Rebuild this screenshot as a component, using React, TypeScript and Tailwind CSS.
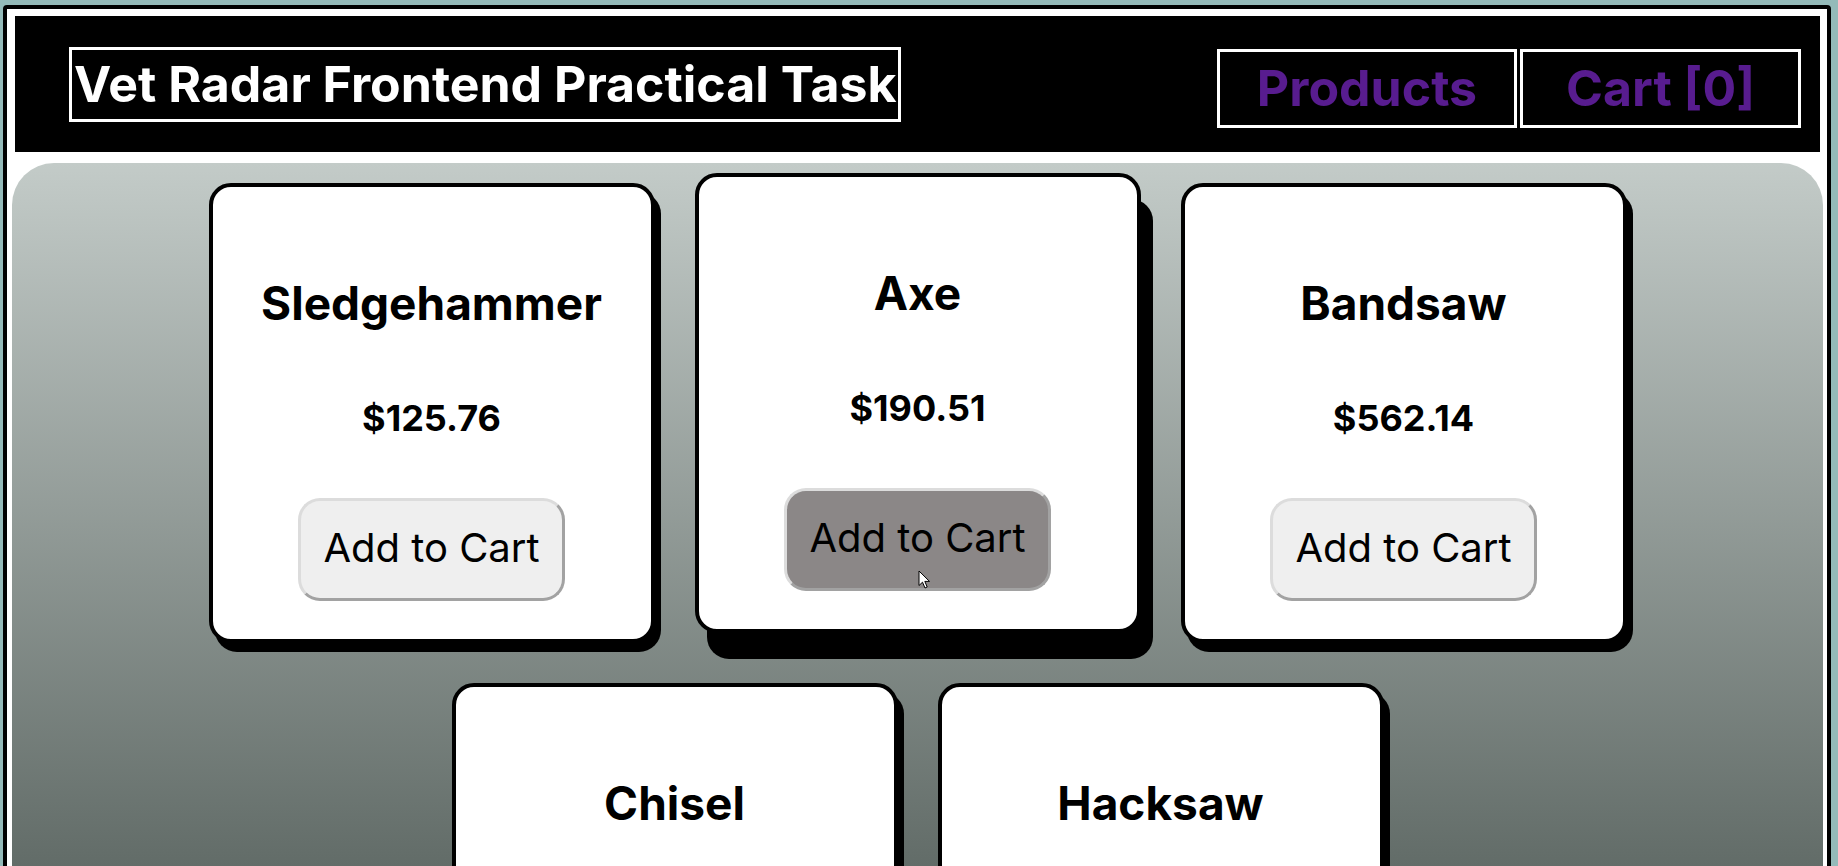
import React from 'react';

type Product = { id: number; name: string; price: number };

const products: Product[] = [
  { id: 1, name: 'Sledgehammer', price: 125.76 },
  { id: 2, name: 'Axe', price: 190.51 },
  { id: 3, name: 'Bandsaw', price: 562.14 },
  { id: 4, name: 'Chisel', price: 13.9 },
  { id: 5, name: 'Hacksaw', price: 18.45 },
];

const Cursor = () => (
  <svg
    width="13"
    height="20"
    viewBox="0 0 13 20"
    className="absolute left-[131px] top-[79px] pointer-events-none"
  >
    <path
      d="M1 1 L1 15.5 L4.5 12.2 L7 18 L9.2 17 L6.8 11.4 L11.5 11.4 Z"
      fill="#fff"
      stroke="#000"
      strokeWidth="1"
      strokeLinejoin="round"
    />
  </svg>
);

const ProductCard: React.FC<{ product: Product; hovered?: boolean }> = ({ product, hovered }) => (
  <div
    className={
      hovered
        ? 'w-[446px] h-[460px] bg-white border-4 border-black rounded-[22px] flex flex-col items-center pt-[88px] pb-[35px] -translate-y-[10px] shadow-[12px_26px_0_0_#000]'
        : 'w-[446px] h-[460px] bg-white border-4 border-black rounded-[22px] flex flex-col items-center pt-[88px] pb-[35px] shadow-[6px_9px_0_0_#000]'
    }
  >
    <h2 className="text-[46px] leading-[56px] font-bold text-black">{product.name}</h2>
    <h3 className="mt-[65px] text-[36px] leading-[44px] font-bold text-black">
      ${product.price.toFixed(2)}
    </h3>
    <button
      className={
        hovered
          ? 'relative mt-[58px] h-[103px] px-[22px] pt-[22px] pb-[25px] text-[40px] leading-[48px] font-normal text-black rounded-[22px] border-[3px] border-t-[#dcdcdc] border-l-[#dcdcdc] border-b-[#a2a2a2] border-r-[#a2a2a2] bg-[#8b8787]'
          : 'relative mt-[58px] h-[103px] px-[22px] pt-[22px] pb-[25px] text-[40px] leading-[48px] font-normal text-black rounded-[22px] border-[3px] border-t-[#dcdcdc] border-l-[#dcdcdc] border-b-[#a2a2a2] border-r-[#a2a2a2] bg-[#efefef]'
      }
    >
      Add to Cart
      {hovered && <Cursor />}
    </button>
  </div>
);

export default function App() {
  return (
    <div className="h-screen overflow-hidden bg-[#94bab9] pt-[5px] pl-[3px] pr-[7px] font-['Inter',sans-serif]">
      <div className="h-[900px] border-4 border-black rounded-[4px] bg-white pl-[5px] pr-[4px] pt-[7px]">
        {/* header */}
        <header className="mx-[3px] h-[136px] bg-black flex items-center justify-between pl-[54px] pr-[19px]">
          <div className="border-[3px] border-white px-[2px] mt-[1px]">
            <h1 className="text-[50px] leading-[69px] font-bold text-white whitespace-nowrap">
              Vet Radar Frontend Practical Task
            </h1>
          </div>
          <nav className="flex gap-[3px] mt-[9px]">
            <a className="border-[3px] border-white px-[37px] h-[79px] text-[50px] leading-[73px] font-bold text-[#581c8f]">
              Products
            </a>
            <a className="border-[3px] border-white px-[43px] h-[79px] text-[50px] leading-[73px] font-bold text-[#581c8f]">
              Cart [0]
            </a>
          </nav>
        </header>

        {/* product grid */}
        <main className="mt-[11px] rounded-t-[42px] bg-[linear-gradient(180deg,#c3cbc8_0px,#626c68_703px,#3c4542_1000px)] pt-[20px] pb-[40px] flex flex-wrap justify-center gap-x-[40px] gap-y-[40px]">
          {products.map((p) => (
            <ProductCard key={p.id} product={p} hovered={p.name === 'Axe'} />
          ))}
        </main>
      </div>
    </div>
  );
}
